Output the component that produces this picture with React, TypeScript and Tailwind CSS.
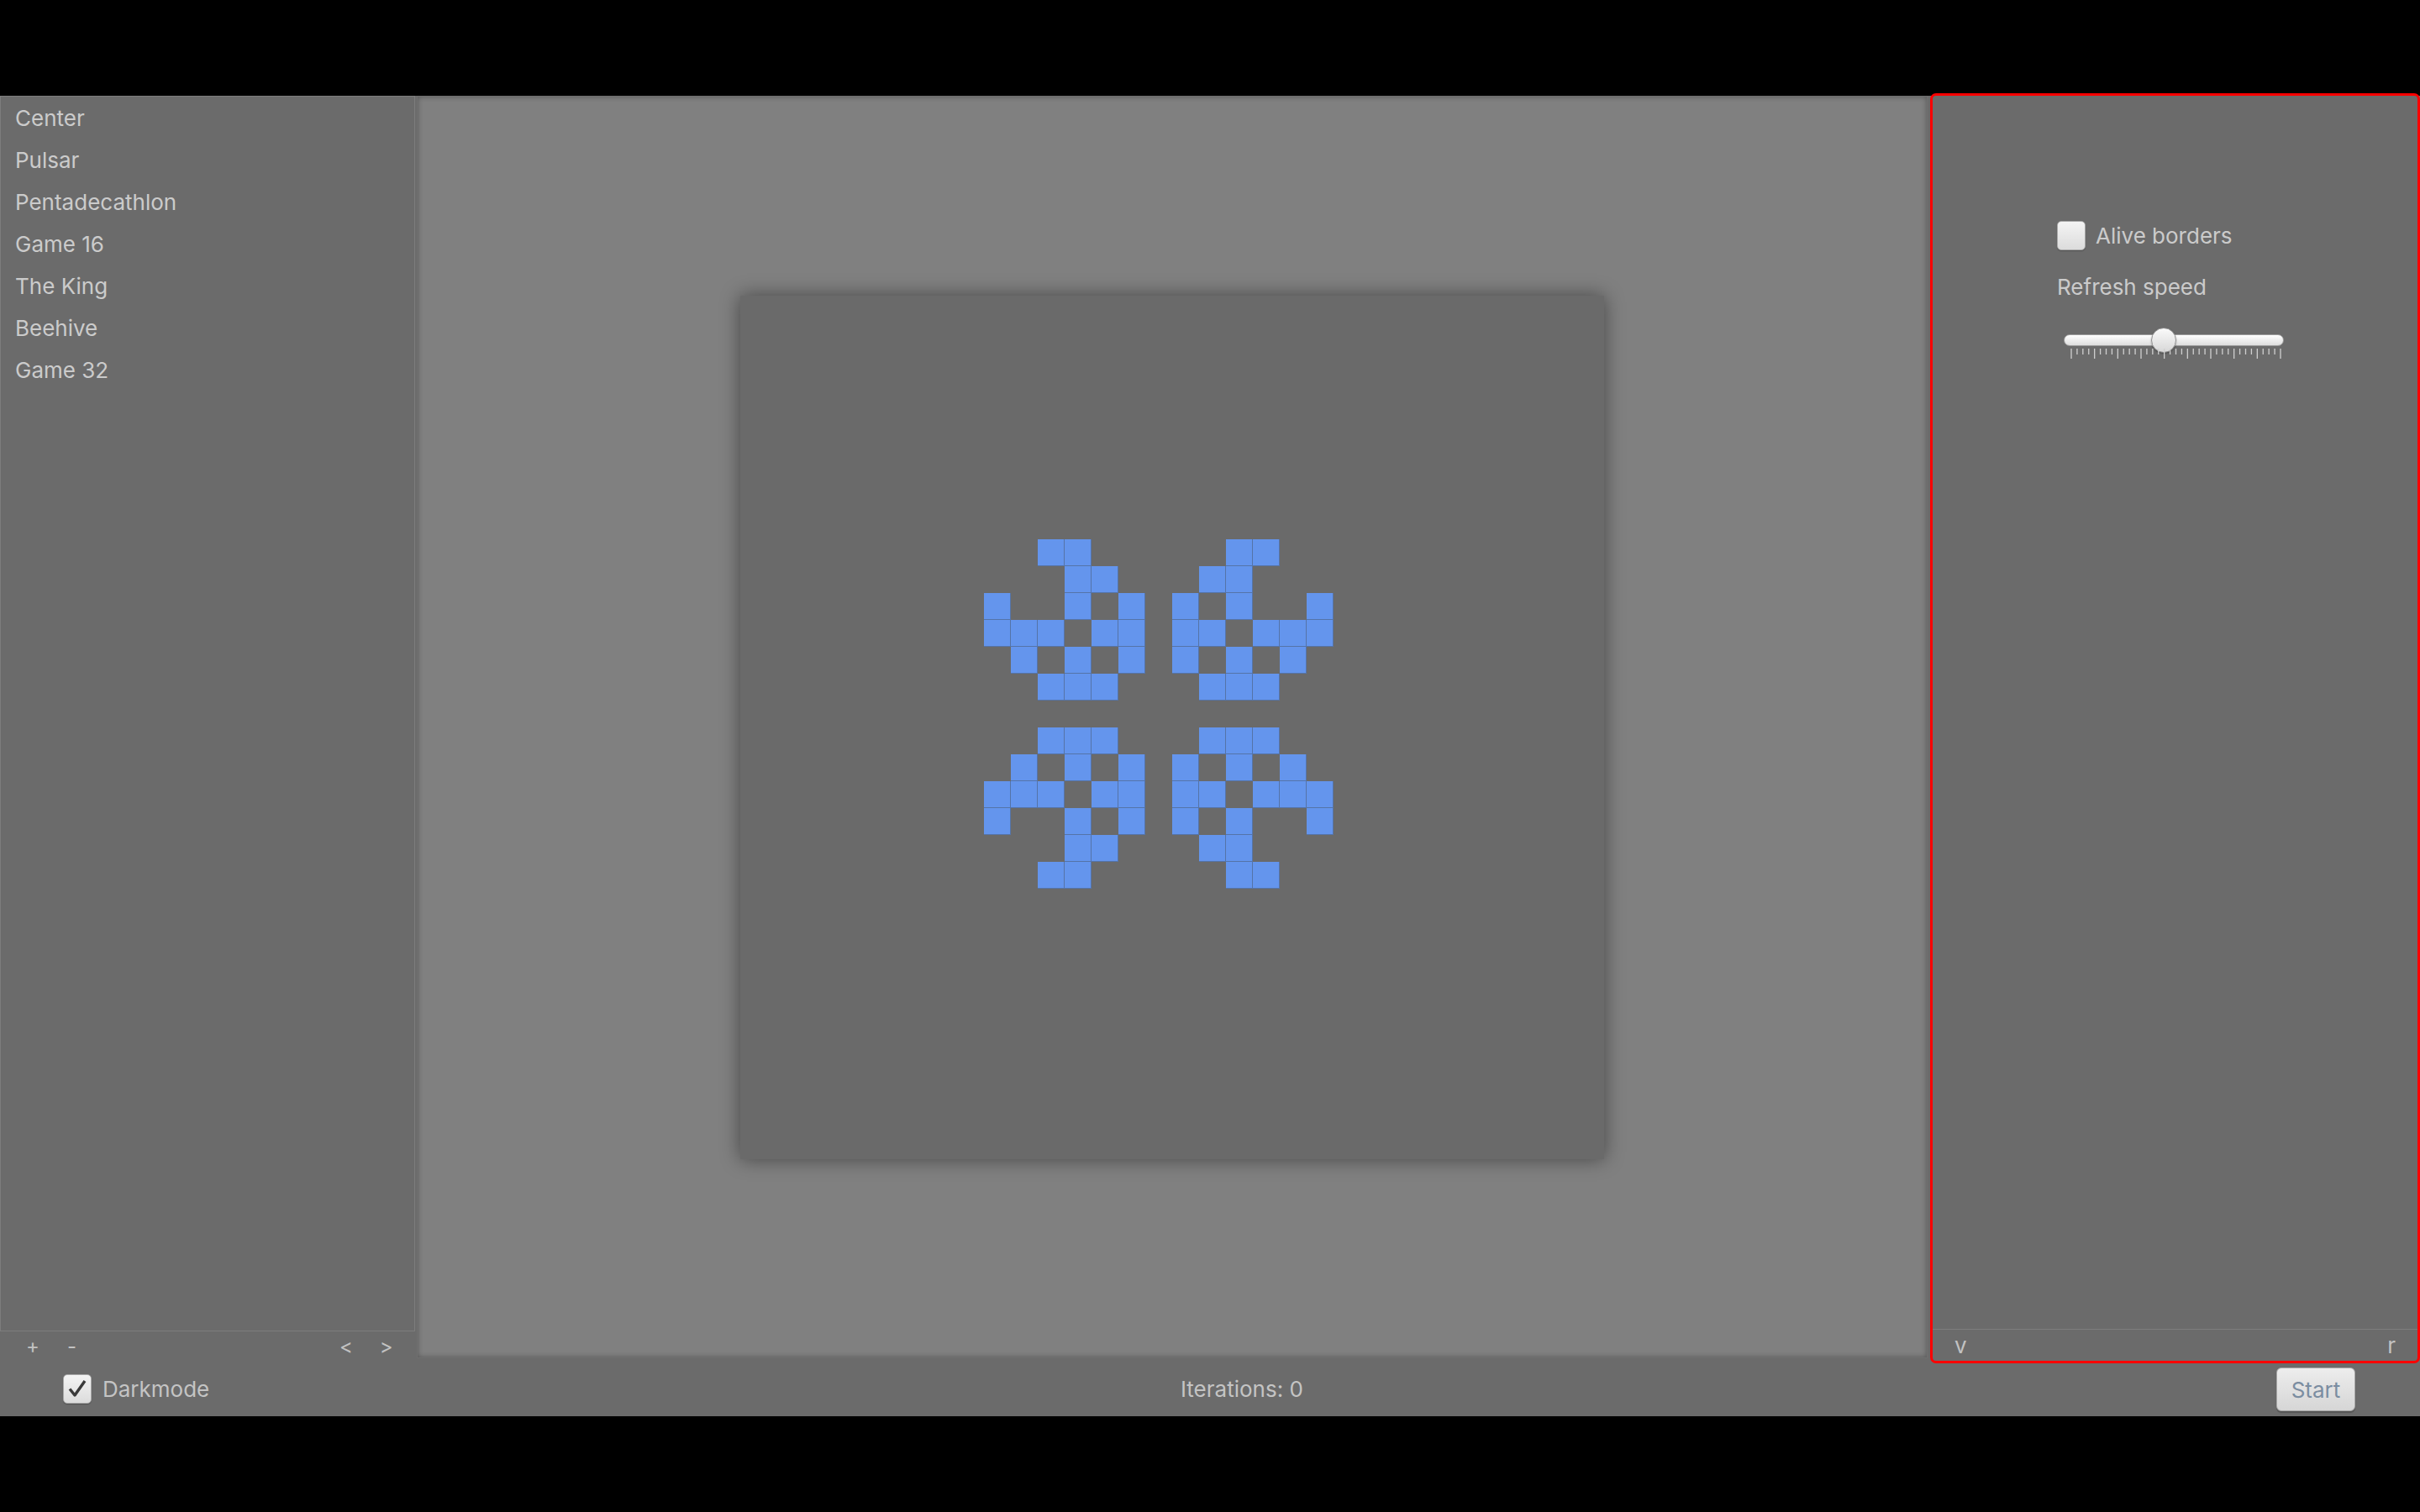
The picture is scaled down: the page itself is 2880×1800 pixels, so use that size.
import { useMemo } from "react";

const presets = ["Center", "Pulsar", "Pentadecathlon", "Game 16", "The King", "Beehive", "Game 32"];

// one quarter of the pattern, mirrored into the other three
const quarter: number[][] = [
  [2, 3],
  [3, 4],
  [0, 3, 5],
  [0, 1, 2, 4, 5],
  [1, 3, 5],
  [2, 3, 4],
];

const SIZE = 32;
const OFFSET = 9;

function buildBoard() {
  const alive = new Set<number>();
  quarter.forEach((cols, r) => {
    cols.forEach((c) => {
      const spots = [
        [r, c],
        [r, 12 - c],
        [12 - r, c],
        [12 - r, 12 - c],
      ];
      spots.forEach(([y, x]) => alive.add((y + OFFSET) * SIZE + (x + OFFSET)));
    });
  });
  return alive;
}

function Checkbox({ checked }: { checked?: boolean }) {
  return (
    <div className="flex h-[35px] w-[34px] items-center justify-center rounded-[5px] border border-[#a8a8a8] bg-gradient-to-b from-[#f4f4f4] to-[#dcdcdc] shadow-[0_1px_1px_rgba(0,0,0,0.25)]">
      {checked ? (
        <svg width="24" height="24" viewBox="0 0 24 24">
          <path d="M3 12.5 L9 20 L21 3" fill="none" stroke="#3a3a3a" strokeWidth="3.4" strokeLinejoin="round" />
        </svg>
      ) : null}
    </div>
  );
}

function Slider() {
  const ticks = Array.from({ length: 37 }, (_, i) => i);
  return (
    <div className="relative h-[34px] w-[262px]">
      <div className="absolute left-0 top-[4px] h-[14px] w-[262px] rounded-full border border-[#9c9c9c] bg-gradient-to-b from-[#ffffff] to-[#dedede]" />
      <div className="absolute left-[104px] top-[-4px] h-[30px] w-[30px] rounded-full border border-[#8e8e8e] bg-gradient-to-b from-[#fafafa] to-[#d8d8d8] shadow-[0_1px_2px_rgba(0,0,0,0.35)]" />
      <svg className="absolute left-[8px] top-[21px]" width="252" height="13" viewBox="0 0 252 13">
        {ticks.map((i) => {
          const x = 1 + i * (249 / 36);
          const major = i % 4 === 0;
          return (
            <line
              key={i}
              x1={x}
              x2={x}
              y1={0}
              y2={major ? 12 : 7}
              stroke="#cfcfcf"
              strokeWidth="1.3"
            />
          );
        })}
      </svg>
    </div>
  );
}

export default function App() {
  const alive = useMemo(buildBoard, []);
  const cells = Array.from({ length: SIZE * SIZE }, (_, i) => i);

  return (
    <div className="flex h-[1800px] w-[2880px] flex-col bg-black font-['Inter','Noto_Sans',sans-serif] text-[26px] text-[#cbcbcb]">
      <div className="h-[114px] shrink-0" />

      <div className="flex h-[1572px] flex-col bg-[#6b6b6b]">
        <div className="flex h-[1506px]">
          {/* presets list */}
          <div className="flex w-[494px] flex-col">
            <div className="flex-1 border border-[#7d7d7d]">
              {presets.map((name) => (
                <div key={name} className="flex h-[50px] items-center pl-[17px]">
                  {name}
                </div>
              ))}
            </div>
            <div className="flex h-[35px] items-center text-[24px] text-[#c2c2c2]">
              <span className="ml-[31px]">+</span>
              <span className="ml-[33px]">-</span>
              <span className="ml-[313px]">&lt;</span>
              <span className="ml-[32px]">&gt;</span>
            </div>
          </div>

          {/* board area */}
          <div className="ml-[2px] flex h-[1503px] w-[1798px] items-center justify-center border border-[#6f6f6f] bg-[#808080] shadow-[inset_0_0_6px_rgba(0,0,0,0.35)]">
            <div className="grid h-[1028px] w-[1028px] grid-cols-[repeat(32,32px)] grid-rows-[repeat(32,32px)] bg-[#6a6a6a] p-[2px] shadow-[0_0_22px_rgba(0,0,0,0.45)]">
              {cells.map((i) =>
                alive.has(i) ? (
                  <div key={i} className="border-r border-b border-[#5574a8] bg-[#6495ed]" />
                ) : (
                  <div key={i} />
                )
              )}
            </div>
          </div>

          {/* settings */}
          <div className="ml-[6px] mr-[3px] flex w-[577px] flex-col rounded-[4px] bg-[#6b6b6b] outline-[3px] outline-[#ff0000] outline-solid">
            <div className="flex flex-1 flex-col pl-[148px] pt-[147px]">
              <div className="flex items-center gap-[12px]">
                <Checkbox />
                <span>Alive borders</span>
              </div>
              <div className="mt-[22px]">Refresh speed</div>
              <div className="ml-[8px] mt-[33px]">
                <Slider />
              </div>
            </div>
            <div className="flex h-[38px] items-center justify-between border-t border-[#7d7d7d] px-[26px] text-[#c2c2c2]">
              <span>v</span>
              <span>r</span>
            </div>
          </div>
        </div>

        {/* status bar */}
        <div className="flex flex-1 items-center">
          <div className="flex w-[1405px] items-center gap-[13px] pl-[75px]">
            <Checkbox checked />
            <span className="text-[#c4c4c4]">Darkmode</span>
          </div>
          <div className="text-[#c4c4c4]">Iterations: 0</div>
          <button
            type="button"
            className="ml-auto mr-[77px] mt-[2px] h-[52px] w-[94px] rounded-[6px] border border-[#a8a8a8] bg-gradient-to-b from-[#ededed] to-[#d6d6d6] text-[#7b8da1] shadow-[0_2px_1px_rgba(0,0,0,0.2)]"
          >
            Start
          </button>
        </div>
      </div>
    </div>
  );
}
